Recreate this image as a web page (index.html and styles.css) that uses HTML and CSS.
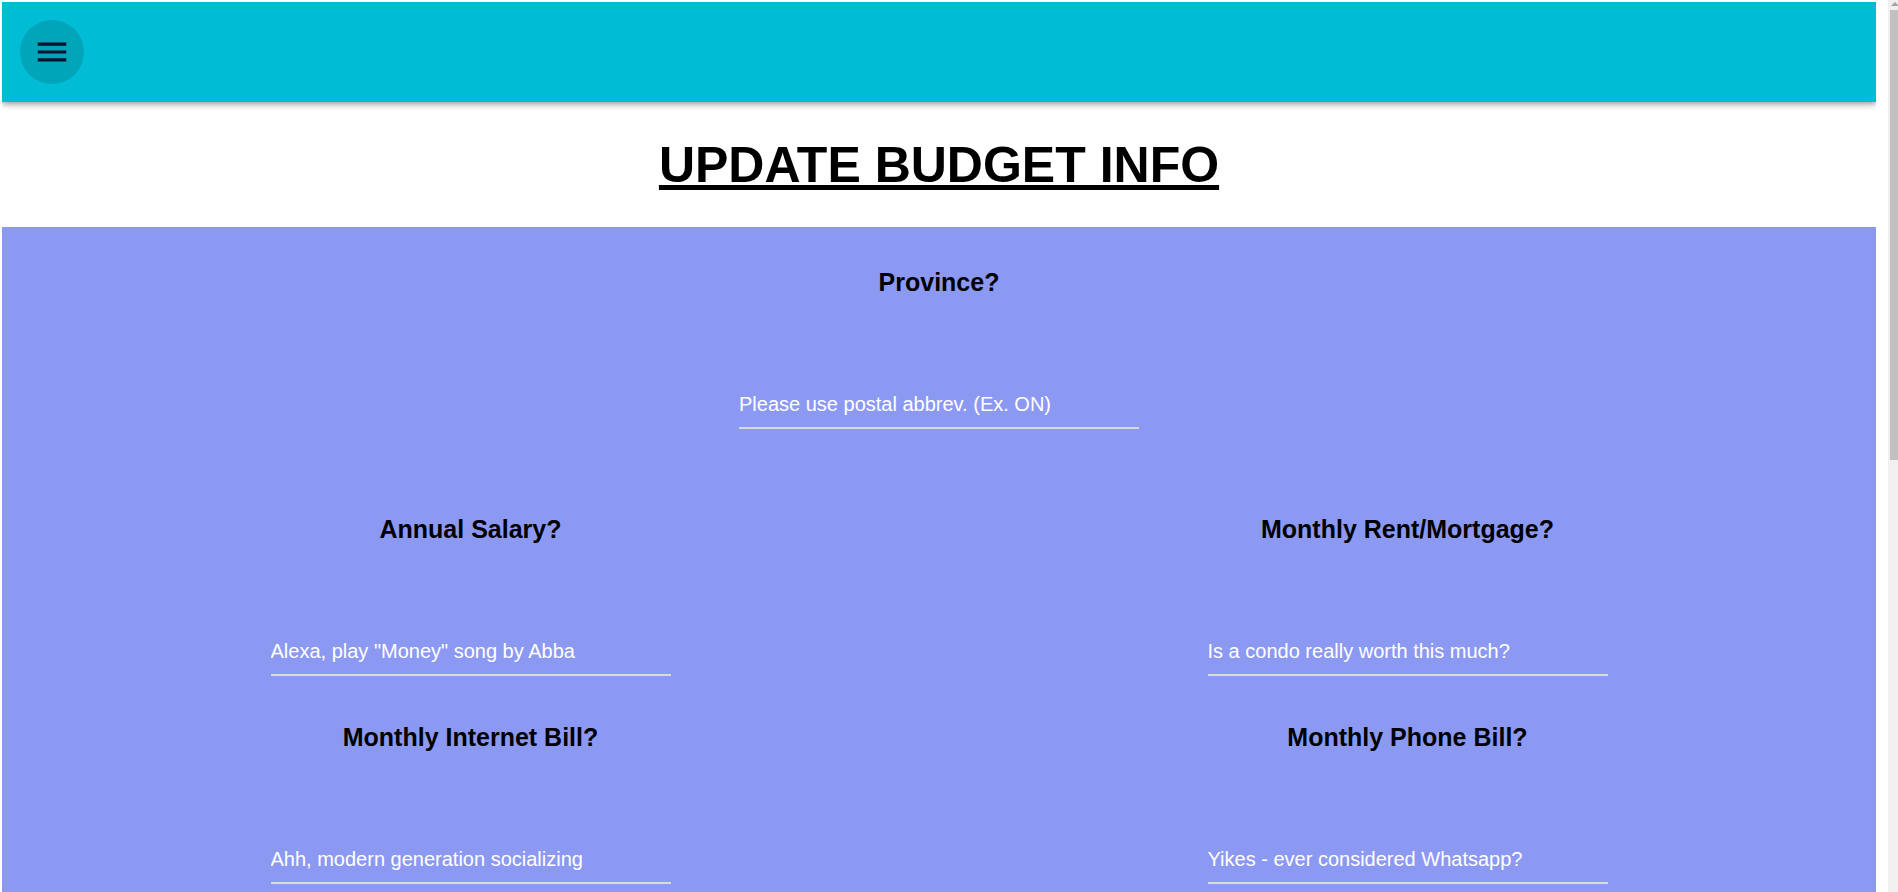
FILE: index.html
```html
<!DOCTYPE html>
<html lang="en">
<head>
<meta charset="utf-8">
<title>Update Budget Info</title>
<link rel="stylesheet" href="styles.css">
</head>
<body>
<div class="page">
  <header class="appbar">
    <button class="menu-btn" aria-label="Open menu">
      <svg class="menu-icon" viewBox="0 0 24 24" width="38" height="38" aria-hidden="true">
        <path d="M3 18h18v-2H3v2zm0-5h18v-2H3v2zm0-7v2h18V6H3z"/>
      </svg>
    </button>
  </header>

  <h1 class="title">UPDATE BUDGET INFO</h1>

  <form class="budget-form">
    <div class="field field-province">
      <h3 class="label">Province?</h3>
      <input class="text-input" type="text" placeholder="Please use postal abbrev. (Ex. ON)">
    </div>

    <div class="grid">
      <div class="field">
        <h3 class="label">Annual Salary?</h3>
        <input class="text-input" type="text" placeholder="Alexa, play &quot;Money&quot; song by Abba">
      </div>
      <div class="field">
        <h3 class="label">Monthly Rent/Mortgage?</h3>
        <input class="text-input" type="text" placeholder="Is a condo really worth this much?">
      </div>
      <div class="field">
        <h3 class="label">Monthly Internet Bill?</h3>
        <input class="text-input" type="text" placeholder="Ahh, modern generation socializing">
      </div>
      <div class="field">
        <h3 class="label">Monthly Phone Bill?</h3>
        <input class="text-input" type="text" placeholder="Yikes - ever considered Whatsapp?">
      </div>
    </div>
  </form>
</div>

<div class="scrollbar" aria-hidden="true">
  <div class="scroll-arrow"></div>
  <div class="scroll-thumb"></div>
</div>
</body>
</html>
```

FILE: styles.css
```css
body {
  margin: 2px 22px 0 2px;
  background: #ffffff;
  font-family: "Liberation Sans", Arial, sans-serif;
  color: #000000;
}

.page {
  display: flex;
  flex-direction: column;
}

.appbar {
  height: 100px;
  background: #00bcd4;
  display: flex;
  align-items: center;
  padding-left: 18px;
  box-shadow: 0 2px 4px -1px rgba(0, 0, 0, 0.2), 0 4px 5px 0 rgba(0, 0, 0, 0.14), 0 1px 10px 0 rgba(0, 0, 0, 0.12);
  position: relative;
  z-index: 1;
}

.menu-btn {
  width: 64px;
  height: 64px;
  border: none;
  border-radius: 50%;
  background: rgba(0, 0, 0, 0.12);
  padding: 0;
  display: flex;
  align-items: center;
  justify-content: center;
  cursor: pointer;
}

.menu-icon {
  display: block;
  fill: #0a1230;
}

.title {
  margin: 33.5px 0;
  font-size: 50px;
  font-weight: bold;
  text-align: center;
  text-decoration: underline;
  line-height: normal;
}

.budget-form {
  background: #8c99f2;
  padding: 40.5px 0 120px;
}

.field {
  display: flex;
  flex-direction: column;
  align-items: center;
}

.field-province {
  margin-bottom: 86px;
}

.label {
  margin: 0 0 97px;
  font-size: 25px;
  line-height: 28px;
  font-weight: bold;
  text-align: center;
}

.grid {
  display: grid;
  grid-template-columns: 1fr 1fr;
  row-gap: 47px;
}

.text-input {
  box-sizing: content-box;
  width: 400px;
  height: 24px;
  padding: 0 0 10px;
  margin: 0;
  border: none;
  border-bottom: 2px solid #d9d9e0;
  background: transparent;
  font-family: "Liberation Sans", Arial, sans-serif;
  font-size: 20px;
  color: #ffffff;
  outline: none;
}

.text-input::placeholder {
  color: #ffffff;
  opacity: 1;
}

/* browser scrollbar strip at the right window edge */
.scrollbar {
  position: fixed;
  top: 0;
  right: 0;
  width: 10px;
  height: 100vh;
  background: #f0f0f0;
  z-index: 5;
}

.scroll-arrow {
  position: absolute;
  top: 2px;
  left: 3px;
  width: 0;
  height: 0;
  border-left: 4px solid transparent;
  border-right: 4px solid transparent;
  border-bottom: 4px solid #a3a3a3;
}

.scroll-thumb {
  position: absolute;
  top: 10px;
  left: 2px;
  right: 0;
  height: 450px;
  background: #c1c1c1;
}
```
